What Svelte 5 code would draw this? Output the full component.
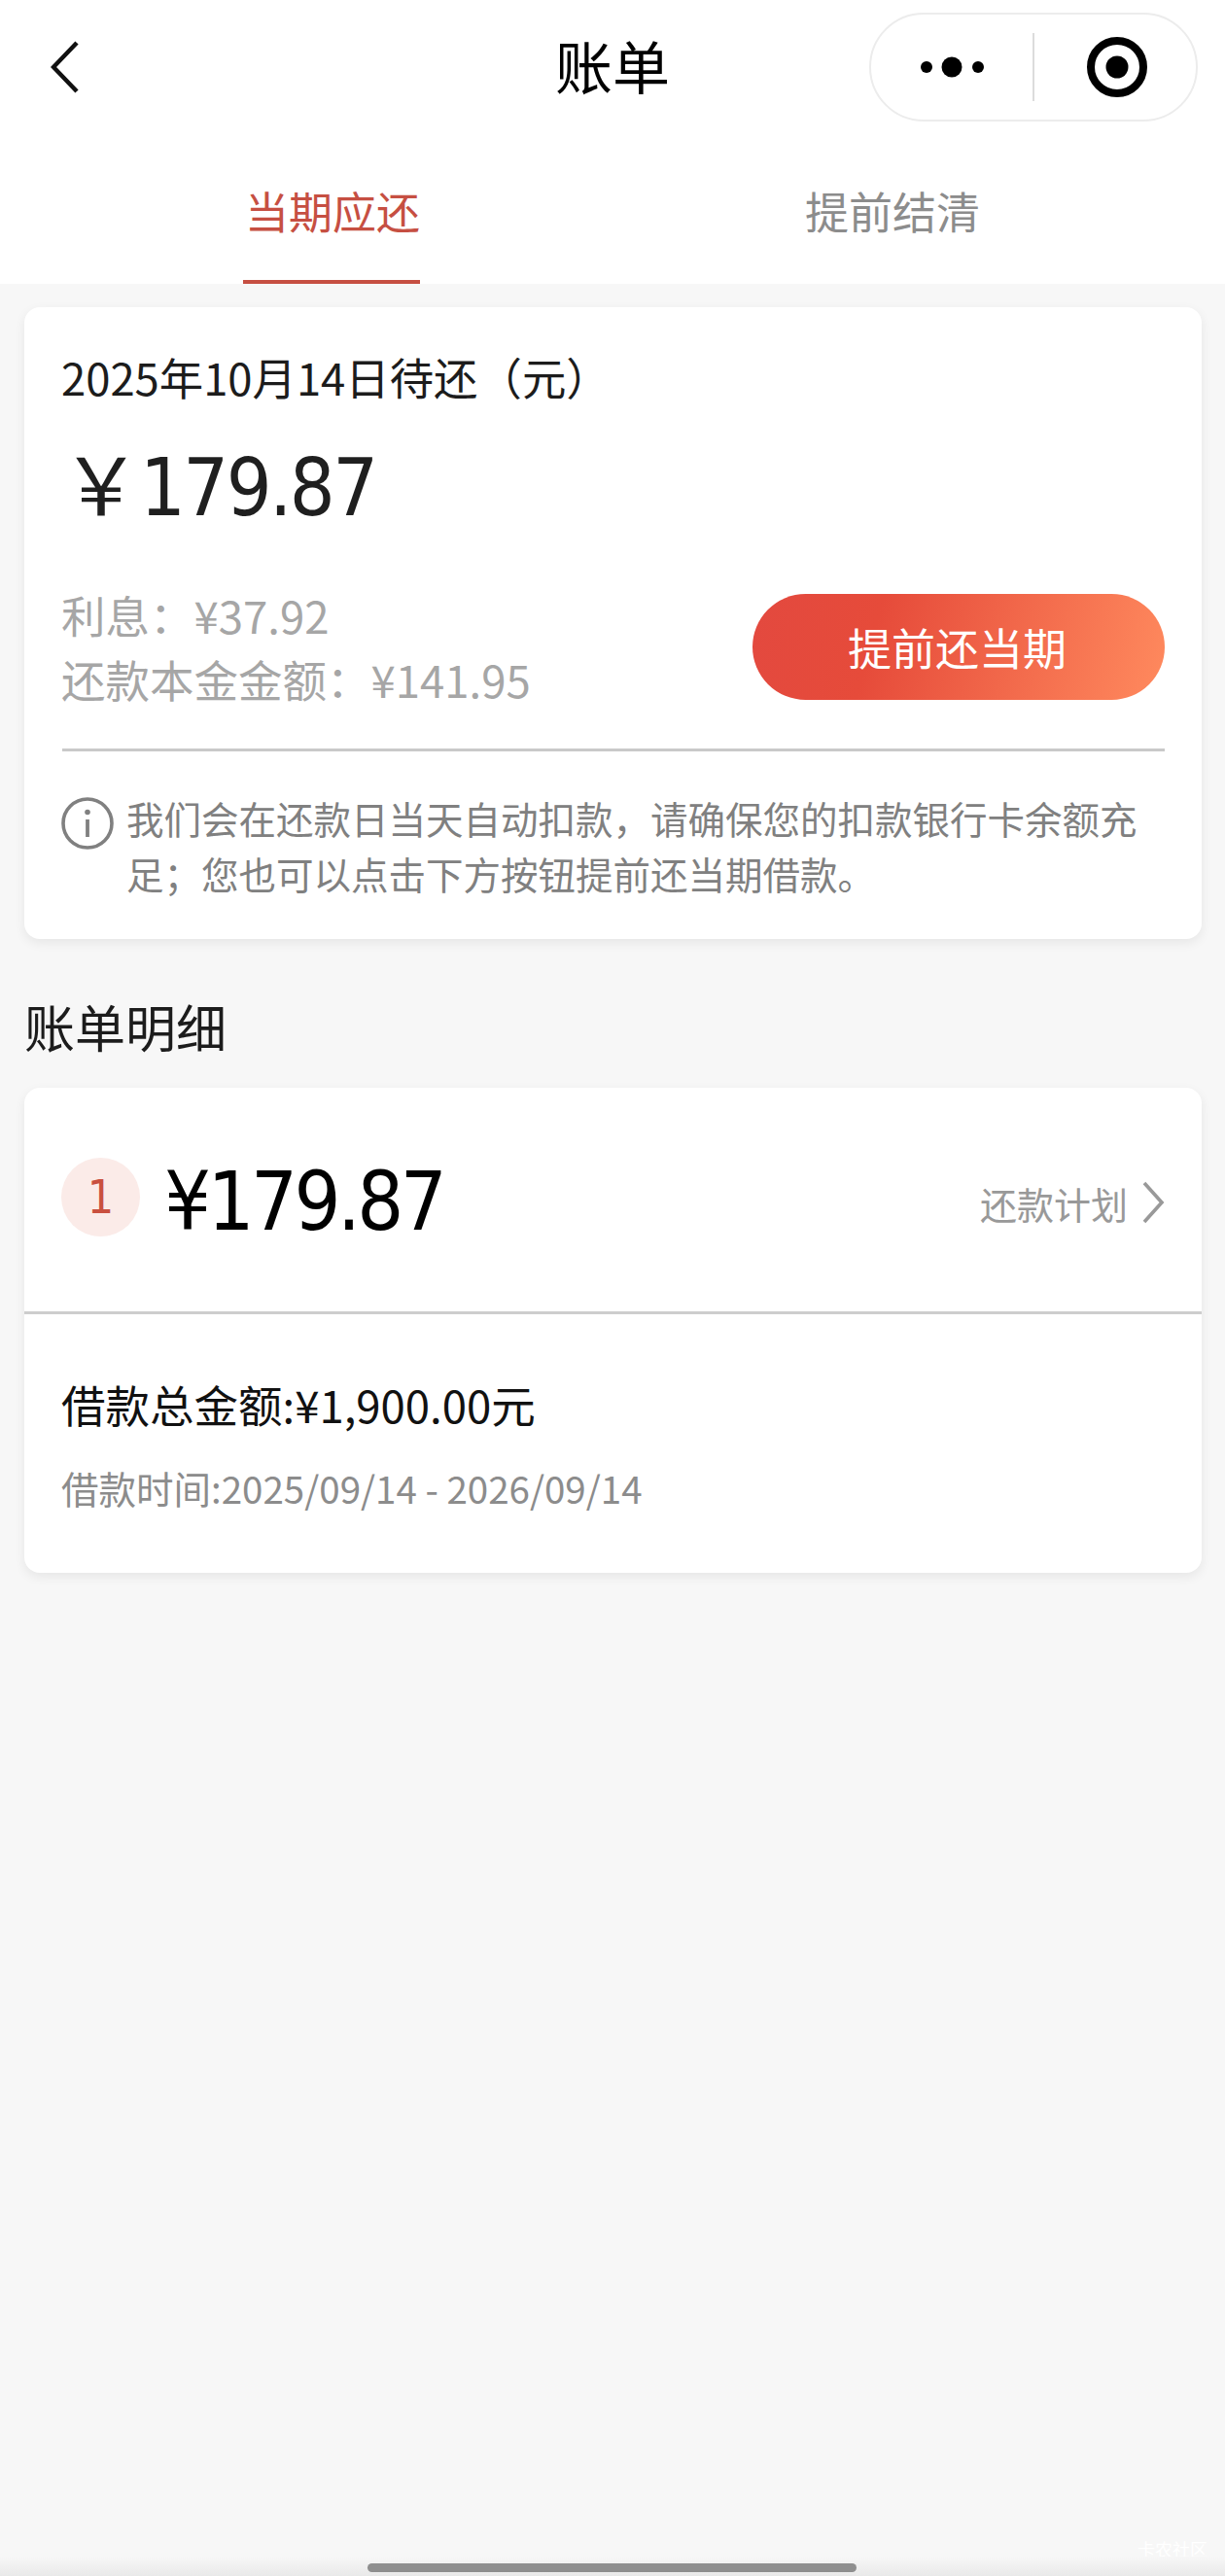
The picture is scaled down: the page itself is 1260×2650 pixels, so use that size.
<script>
  const info = "我们会在还款日当天自动扣款，请确保您的扣款银行卡余额充足；您也可以点击下方按钮提前还当期借款。";
</script>

<div class="page">
  <header class="top">
    <div class="nav">
      <svg class="back" width="30" height="54" viewBox="0 0 30 54"><path d="M27 2 L3 27 L27 52" fill="none" stroke="#111" stroke-width="4.5"/></svg>
      <div class="title">账单</div>
      <div class="capsule">
        <svg width="80" height="24" viewBox="0 0 80 24"><circle cx="11" cy="12" r="6"/><circle cx="37" cy="12" r="10.5"/><circle cx="64" cy="12" r="6"/></svg>
        <span class="cap-line"></span>
        <svg width="64" height="64" viewBox="0 0 64 64"><circle cx="32" cy="32" r="27" fill="none" stroke="#000" stroke-width="8"/><circle cx="32" cy="32" r="11.5"/></svg>
      </div>
    </div>
    <nav class="tabs">
      <div class="tab active">当期应还</div>
      <div class="tab">提前结清</div>
    </nav>
  </header>

  <main class="body">
    <section class="card due">
      <div class="due-date">2025年10月14日待还（元）</div>
      <div class="due-amount"><span class="cny">￥</span>179.87</div>
      <div class="due-row">
        <div class="due-lines">
          <div>利息：¥37.92</div>
          <div>还款本金金额：¥141.95</div>
        </div>
        <button class="pay">提前还当期</button>
      </div>
      <div class="rule"></div>
      <div class="notice">
        <svg class="i" width="54" height="54" viewBox="0 0 54 54">
          <circle cx="27" cy="27" r="25" fill="none" stroke="#808080" stroke-width="3.6"/>
          <circle cx="27" cy="15.5" r="2.8" fill="#808080"/>
          <path d="M27 23 V41" stroke="#808080" stroke-width="3.8"/>
        </svg>
        <p>{info}</p>
      </div>
    </section>

    <h2>账单明细</h2>

    <section class="card detail">
      <div class="d-top">
        <div class="num">1</div>
        <div class="d-amount">¥179.87</div>
        <div class="plan">
          <span>还款计划</span>
          <svg width="24" height="44" viewBox="0 0 24 44"><path d="M3 2 L21 22 L3 42" fill="none" stroke="#999" stroke-width="3.6"/></svg>
        </div>
      </div>
      <div class="d-bottom">
        <div class="total">借款总金额:¥1,900.00元</div>
        <div class="time">借款时间:2025/09/14 - 2026/09/14</div>
      </div>
    </section>
  </main>

  <div class="mark">卡农社区</div>
  <div class="home"><span></span></div>
</div>

<style>
  :global(body) { margin: 0; background: #f7f7f7; }
  .page {
    width: 1260px; height: 2650px; background: #f7f7f7; position: relative; overflow: hidden;
    font-family: "Noto Sans CJK SC", "Liberation Sans", sans-serif; color: #1c1c1c;
  }
  .top { background: #fff; height: 292px; }
  .nav { height: 138px; position: relative; display: flex; align-items: center; justify-content: center; }
  .back { position: absolute; left: 52px; top: 42px; }
  .title { font-size: 59px; line-height: 1; color: #000; margin-top: -6px; }
  .capsule {
    position: absolute; left: 894px; top: 13px; box-sizing: border-box; width: 338px; height: 112px;
    border: 2px solid #ececec; border-radius: 56px; display: flex; align-items: center; background: #fff;
    padding-left: 46px;
  }
  .cap-line { width: 2px; height: 70px; background: #dcdcdc; margin-left: 40px; margin-right: 53px; }
  .tabs { display: flex; height: 154px; }
  .tab {
    position: relative; width: 576px; text-align: center; font-size: 45px; line-height: 64px; padding-top: 47px;
    color: #8c8c8c; box-sizing: border-box;
  }
  .tab:first-child { margin-left: 54px; }
  .tab.active { color: #c64f42; width: 576px; }
  .tab.active::after {
    content: ""; position: absolute; left: 196px; width: 182px; top: 150px; height: 4px; background: #c64f42;
  }
  .body { padding: 24px 24px 0 25px; }
  .card { background: #fff; border-radius: 16px; box-shadow: 0 4px 12px rgba(0,0,0,.07); }
  .due { height: 650px; padding: 41px 38px 0; box-sizing: border-box; }
  .due-date { font-size: 45.4px; line-height: 60px; color: #1c1c1c; }
  .due-amount {
    font-family: "DejaVu Sans", sans-serif; font-stretch: condensed; font-size: 82px; line-height: 100px;
    margin-top: 28px; color: #1f1f1f; letter-spacing: -2.6px;
  }
  .cny { font-family: "Noto Sans CJK SC", sans-serif; letter-spacing: -1px; }
  .due-row { display: flex; justify-content: space-between; align-items: center; margin-top: 47px; }
  .due-lines { font-size: 45.5px; line-height: 66px; color: #a6a6a6; }
  .pay {
    width: 424px; height: 109px; border: 0; border-radius: 55px; color: #fff; font: inherit; font-size: 45px;
    background: linear-gradient(105deg, #e3493f 0%, #e64b3a 30%, #ff8a5e 100%);
    padding: 0 3px 0 0; margin-top: 1px;
  }
  .rule { height: 3px; background: #c9c9c9; margin-top: 39px; margin-left: 1px; }
  .notice { display: flex; margin-top: 43px; }
  .i { flex: none; margin: 4px 13px 0 0; }
  .notice p { margin: -3px 0 0; font-size: 38.5px; line-height: 57px; color: #808080; width: 1060px; }
  h2 { font-size: 52px; font-weight: 400; margin: 54px 0 0; line-height: 72px; color: #1c1c1c; }
  .detail { margin-top: 27px; height: 499px; }
  .d-top { height: 233px; box-sizing: border-box; padding: 0 38px; border-bottom: 3px solid #cdcdcd; display: flex; align-items: center; }
  .num {
    width: 81px; height: 81px; border-radius: 50%; background: #fbebe8; color: #c9503f; font-size: 48px; line-height: 81px;
    text-align: center; font-family: "DejaVu Sans", sans-serif; font-stretch: condensed; margin-top: -6px;
  }
  .d-amount {
    font-family: "DejaVu Sans", sans-serif; font-stretch: condensed; font-size: 84px; line-height: 100px; color: #000;
    margin-left: 25px; letter-spacing: -3.6px; margin-top: 3px;
  }
  .plan { margin-left: auto; display: flex; align-items: center; gap: 14px; color: #999; font-size: 38px; margin-top: 6px; }
  .plan svg { display: block; }
  .d-bottom { padding: 58px 38px 0 38px; }
  .total { font-size: 45.5px; line-height: 68px; color: #111; }
  .time { font-size: 38.5px; line-height: 60px; color: #8c8c8c; margin-top: 22px; }
  .mark { position: absolute; left: 1170px; top: 2610px; font-size: 18px; line-height: 24px; color: #fff; }
  .home { position: absolute; left: 0; right: 0; bottom: 0; height: 20px; background: linear-gradient(#f7f7f7, #e9e9e9); }
  .home span { position: absolute; left: 378px; width: 503px; top: 7px; height: 9px; border-radius: 5px; background: #8f8f8f; }
</style>
